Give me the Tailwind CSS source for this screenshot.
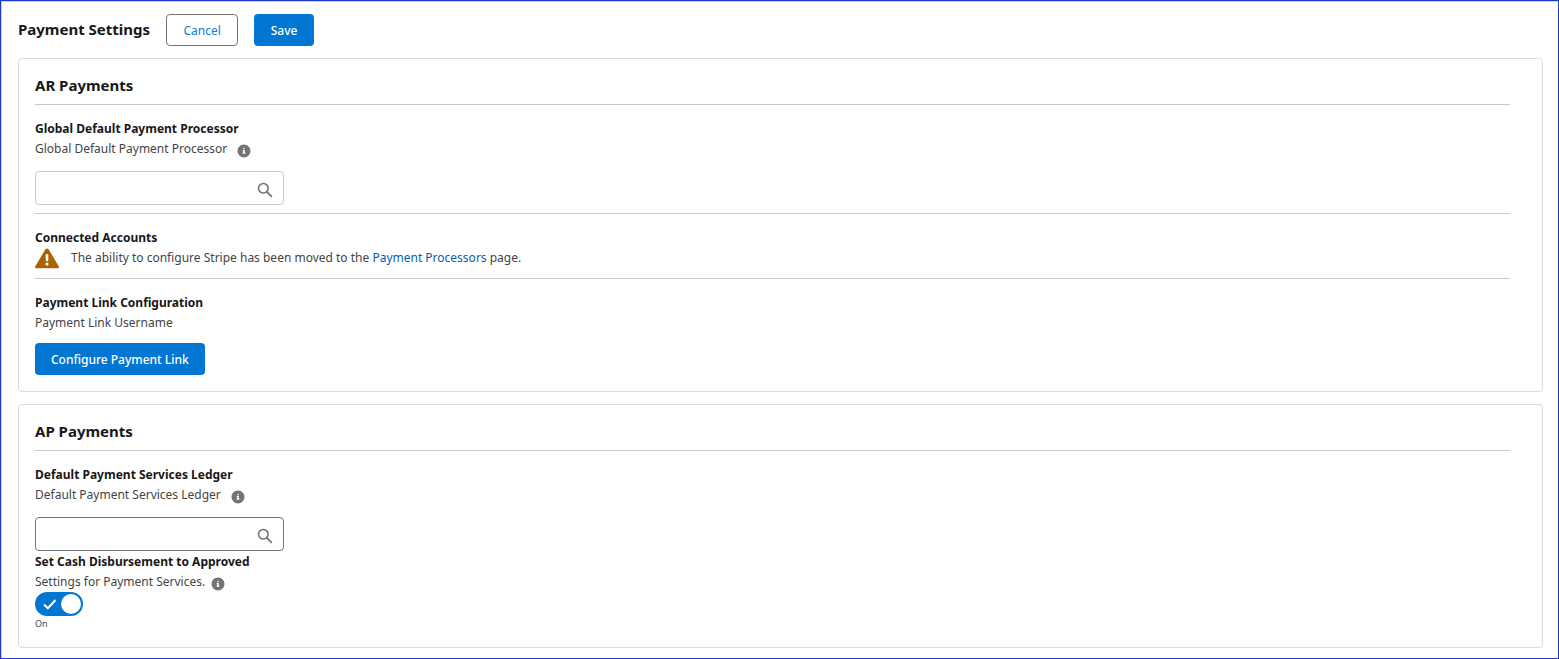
<!DOCTYPE html>
<html lang="en">
<head>
	<meta charset="UTF-8">
	<title>Payment Settings</title>
	<meta name="viewport" content="width=device-width, initial-scale=1.0">
	<script src="https://cdn.jsdelivr.net/npm/@tailwindcss/browser@4"></script>
</head>
<body class="min-h-screen bg-white border border-[#1f3bc4] shadow-[inset_1px_1px_0_#c5cdf0] pl-[17px] pr-[15px] pt-[13px] pb-[10px] font-['Noto_Sans',sans-serif] text-[12px] leading-5 text-[#444444]">

	<!-- Shared icons -->
	<svg class="hidden">
		<symbol id="icon-info" viewBox="0 0 52 52">
			<path fill="currentColor" d="M26 2C12.700 2 2 12.700 2 26s10.700 24 24 24 24-10.700 24-24S39.300 2 26 2zm0 12.100c1.700 0 3 1.300 3 3s-1.300 3-3 3-3-1.300-3-3 1.300-3 3-3zm5 21c0 .5-.4.900-1 .900h-8c-.5 0-1-.3-1-.900v-2c0-.5.4-1.100 1-1.100.5 0 1-.3 1-.900v-4c0-.5-.4-1.100-1-1.100-.5 0-1-.3-1-.900v-2c0-.5.4-1.100 1-1.100h6c.5 0 1 .5 1 1.100v8c0 .5.4.900 1 .900.5 0 1 .5 1 1.100v2z"/>
		</symbol>
		<symbol id="icon-search" viewBox="0 0 52 52">
			<path fill="currentColor" d="M49.600 45.300L35.100 31c2.600-3.600 4-8.100 3.600-12.900C37.900 9.600 30.900 2.700 22.300 2.100 11.100 1.300 1.800 10.600 2.500 21.800c.6 8.600 7.600 15.700 16.200 16.500 4.500.4 8.700-.9 12.100-3.300l14.600 14.500c.5.5 1.300.5 1.800 0l2.400-2.400c.6-.6.6-1.300 0-1.800zM7.500 20.400c0-7.200 5.900-13 13.100-13s13 5.800 13 13-5.800 13-13 13-13.100-5.800-13.100-13z"/>
		</symbol>
	</svg>

	<header class="flex items-center gap-4 mb-3">
		<h1 class="pb-0.5 text-[15px] leading-6 font-bold text-[#181818]">Payment Settings</h1>
		<button type="button" class="h-8 min-w-[72px] pt-px px-[15px] rounded border border-[#747474] bg-white text-[#0b7fdb]">Cancel</button>
		<button type="button" class="h-8 min-w-[60px] pt-px px-4 rounded bg-[#0176d3] font-medium text-white">Save</button>
	</header>

	<main class="flex flex-col gap-3">
		<!-- AR Payments -->
		<section class="rounded border border-[#dddbda] pl-4 pr-8 pt-[14px] pb-4">
			<h2 class="pb-[7px] border-b border-[#c9c9c9] text-[15px] leading-6 font-bold text-[#181818]">AR Payments</h2>

			<div class="pt-[14px] pb-2 border-b border-[#c9c9c9]">
				<h3 class="font-bold text-[#181818]">Global Default Payment Processor</h3>
				<div class="flex items-center gap-[10px] mb-3">
					<label for="processor">Global Default Payment Processor</label>
					<button type="button" aria-label="Help" class="pt-1 text-[#747474]"><svg class="size-[14px]"><use href="#icon-info"/></svg></button>
				</div>
				<div class="relative w-[249px]">
					<input id="processor" type="text" class="block w-full h-[34px] pl-3 pr-9 rounded border border-[#c9c9c9] bg-white">
					<svg class="absolute right-[11px] top-[11px] size-4 text-[#747474] pointer-events-none"><use href="#icon-search"/></svg>
				</div>
			</div>

			<div class="pt-[14px] pb-[9px] border-b border-[#c9c9c9]">
				<h3 class="font-bold text-[#181818]">Connected Accounts</h3>
				<div class="flex items-start gap-3 h-[21px]">
					<svg class="w-6 h-[21px] shrink-0" viewBox="0 0 24 22" preserveAspectRatio="none">
						<path fill="#a86403" d="M10.300 1.500Q12-.5 13.700 1.500L23.700 19Q24.500 21 22.700 21.300H1.300Q-.5 21 .3 19z"/>
						<path stroke="#fff" stroke-width="2.600" stroke-linecap="round" d="M12 7.500v5"/>
						<circle cx="12" cy="16.800" r="1.600" fill="#fff"/>
					</svg>
					<p>The ability to configure Stripe has been moved to the <a href="#" class="text-[#0b5cab]">Payment Processors</a> page.</p>
				</div>
			</div>

			<div class="pt-[14px]">
				<h3 class="font-bold text-[#181818]">Payment Link Configuration</h3>
				<p class="mb-[10px]">Payment Link Username</p>
				<button type="button" class="block h-8 pt-px px-4 rounded bg-[#0176d3] font-medium text-white">Configure Payment Link</button>
			</div>
		</section>

		<!-- AP Payments -->
		<section class="rounded border border-[#dddbda] pl-4 pr-8 pt-[14px] pb-4">
			<h2 class="pb-[7px] border-b border-[#c9c9c9] text-[15px] leading-6 font-bold text-[#181818]">AP Payments</h2>

			<div class="pt-[14px]">
				<h3 class="font-bold text-[#181818]">Default Payment Services Ledger</h3>
				<div class="flex items-center gap-[10px] mb-3">
					<label for="ledger">Default Payment Services Ledger</label>
					<button type="button" aria-label="Help" class="pt-1 text-[#747474]"><svg class="size-[14px]"><use href="#icon-info"/></svg></button>
				</div>
				<div class="relative w-[249px]">
					<input id="ledger" type="text" class="block w-full h-[34px] pl-3 pr-9 rounded border border-[#747474] bg-white">
					<svg class="absolute right-[11px] top-[11px] size-4 text-[#747474] pointer-events-none"><use href="#icon-search"/></svg>
				</div>
			</div>

			<div class="pt-px">
				<h3 class="font-bold text-[#181818]">Set Cash Disbursement to Approved</h3>
				<div class="flex items-center gap-[6px]">
					<label for="approved">Settings for Payment Services.</label>
					<button type="button" aria-label="Help" class="pt-1 text-[#747474]"><svg class="size-[14px]"><use href="#icon-info"/></svg></button>
				</div>
				<div class="relative w-12 h-6">
					<input id="approved" type="checkbox" checked class="peer block appearance-none w-12 h-6 rounded-full bg-[#747474] checked:bg-[#0176d3]">
					<svg class="absolute left-2 top-[6px] w-[14px] h-3 pointer-events-none" viewBox="0 0 14 12" fill="none" stroke="#fff" stroke-width="2">
						<path d="M1 6.500l3.800 3.800L12.500 2"/>
					</svg>
					<span class="absolute top-[2px] left-[2px] peer-checked:left-[26px] size-5 rounded-full bg-white pointer-events-none"></span>
				</div>
				<div class="text-[9px] leading-[15px]">On</div>
			</div>
		</section>
	</main>
</body>
</html>
